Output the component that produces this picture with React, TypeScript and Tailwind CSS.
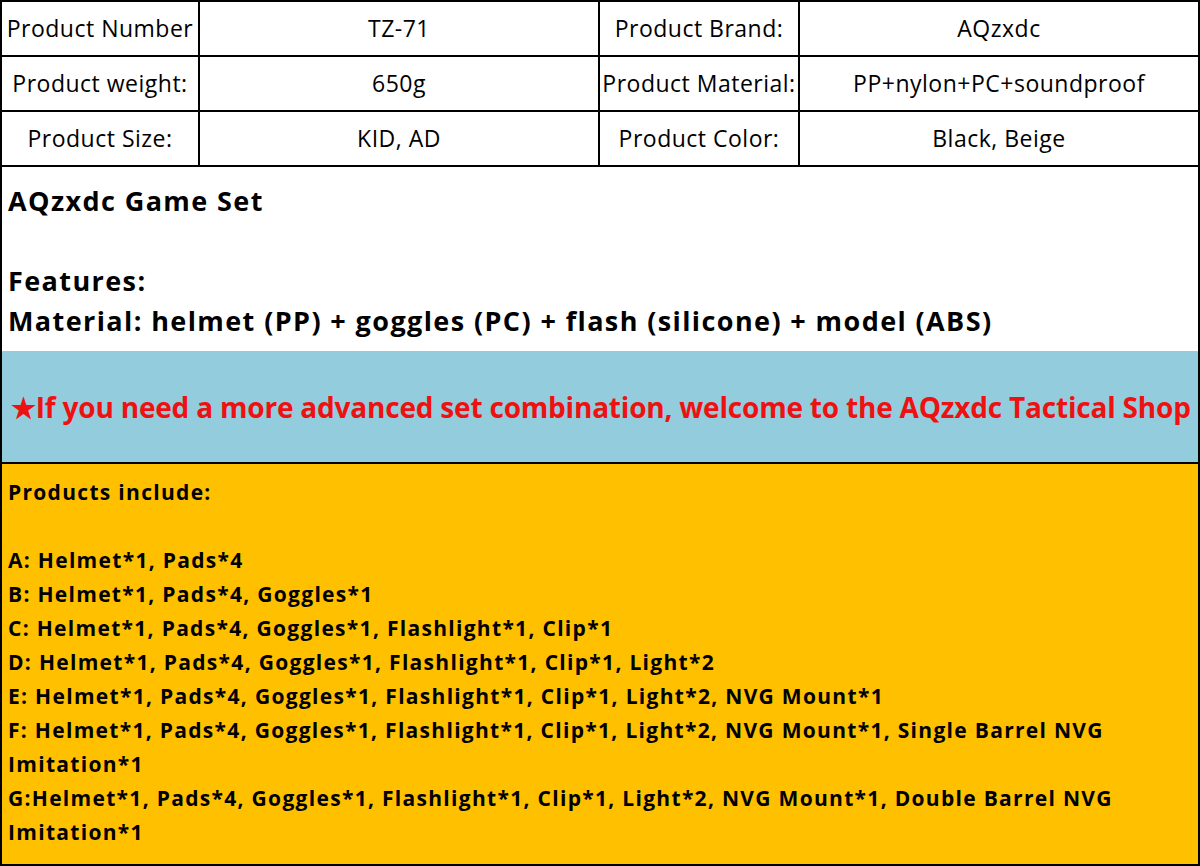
const specs = [
  ["Product Number", "TZ-71", "Product Brand:", "AQzxdc"],
  ["Product weight:", "650g", "Product Material:", "PP+nylon+PC+soundproof"],
  ["Product Size:", "KID, AD", "Product Color:", "Black, Beige"],
];

const options = [
  "A: Helmet*1, Pads*4",
  "B: Helmet*1, Pads*4, Goggles*1",
  "C: Helmet*1, Pads*4, Goggles*1, Flashlight*1, Clip*1",
  "D: Helmet*1, Pads*4, Goggles*1, Flashlight*1, Clip*1, Light*2",
  "E: Helmet*1, Pads*4, Goggles*1, Flashlight*1, Clip*1, Light*2, NVG Mount*1",
  "F: Helmet*1, Pads*4, Goggles*1, Flashlight*1, Clip*1, Light*2, NVG Mount*1, Single Barrel NVG Imitation*1",
  "G:Helmet*1, Pads*4, Goggles*1, Flashlight*1, Clip*1, Light*2, NVG Mount*1, Double Barrel NVG Imitation*1",
];

export default function App() {
  return (
    <div
      className="h-[866px] w-[1200px] overflow-hidden bg-white text-black"
      style={{ fontFamily: '"Open Sans", "Noto Sans", sans-serif' }}
    >
      <div className="h-[866px] w-[1200px] border-2 border-black">
        {/* spec table */}
        <div className="grid grid-cols-[198px_400px_200px_1fr] text-[23px] tracking-[0.5px]">
          {specs.map((row, r) =>
            row.map((cell, c) => (
              <div
                key={`${r}-${c}`}
                className={`flex h-[55px] items-center justify-center border-b-2 border-black ${
                  c < 3 ? "border-r-2" : ""
                }`}
              >
                {cell}
              </div>
            )),
          )}
        </div>

        {/* intro */}
        <div className="h-[184px] px-[6px] pt-[14px] text-[27px] font-bold leading-[40px] tracking-[1.4px]">
          <div>AQzxdc Game Set</div>
          <div className="h-[40px]" />
          <div>Features:</div>
          <div>Material: helmet (PP) + goggles (PC) + flash (silicone) + model (ABS)</div>
        </div>

        {/* shop banner */}
        <div className="flex h-[113px] items-center whitespace-nowrap border-b-2 border-black bg-[#93cddd] px-[9px] text-[28px] font-bold tracking-[-0.2px] text-[#ee1111]">
          ★If you need a more advanced set combination, welcome to the AQzxdc Tactical Shop
        </div>

        {/* included items */}
        <div className="h-[400px] bg-[#ffc000] px-[6px] pt-[11px] text-[21px] font-bold leading-[34px] tracking-[1.3px]">
          <div>Products include:</div>
          <div className="h-[34px]" />
          {options.map((o) => (
            <div key={o}>{o}</div>
          ))}
        </div>
      </div>
    </div>
  );
}
